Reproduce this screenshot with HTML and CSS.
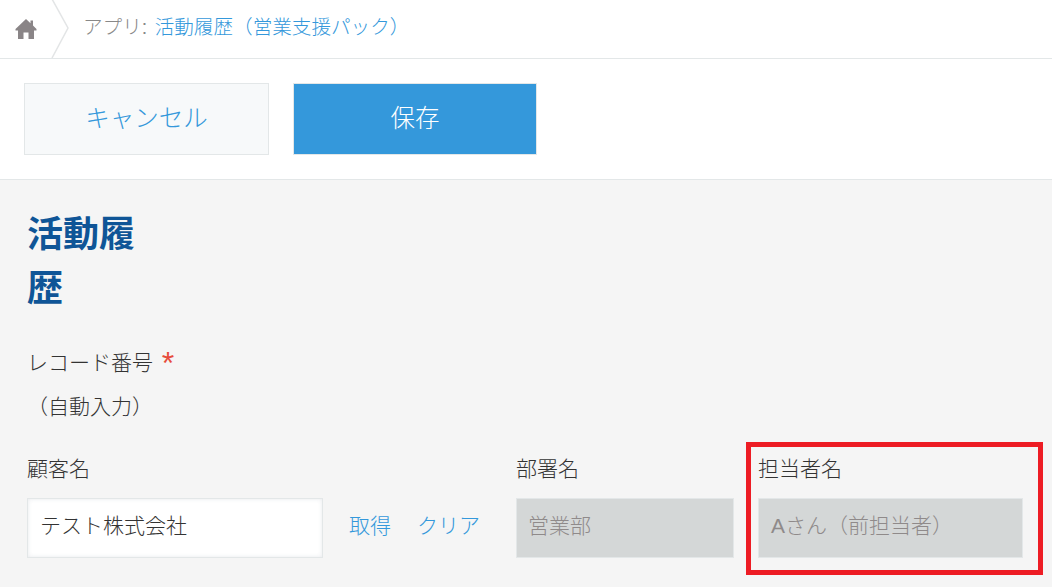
FILE: index.html
```html
<!DOCTYPE html>
<html lang="ja">
<head>
    <meta charset="UTF-8">
    <meta name="viewport" content="width=device-width, initial-scale=1.0">
    <title>活動履歴（営業支援パック）</title>
    <link rel="stylesheet" href="styles.css">
</head>
<body>

    <nav class="breadcrumb">
        <a class="home" href="#">
            <svg width="22" height="22" viewBox="0 0 22 22"><path d="M11 1 L15.5 5.2 V2.5 H18 V7.6 L21.5 11 V12.4 H19 V21 H13.5 V14.5 H8.5 V21 H3 V12.4 H0.5 V11 Z" fill="#8a8587"/></svg>
        </a>
        <svg class="chevron" width="20" height="58" viewBox="0 0 20 58"><path d="M1 -1 L17 28 L1 58" fill="none" stroke="#e3e5e6" stroke-width="1.5"/></svg>
        <span class="crumb-text">アプリ: <a class="crumb-link" href="#">活動履歴（営業支援パック）</a></span>
    </nav>

    <div class="toolbar">
        <button class="btn btn-cancel">キャンセル</button>
        <button class="btn btn-save">保存</button>
    </div>

    <main class="content">
        <h1 class="title">活動履歴</h1>

        <div class="field">
            <div class="label">レコード番号 <span class="required">*</span></div>
            <div class="value">（自動入力）</div>
        </div>

        <div class="row">
            <div class="col">
                <div class="label">顧客名</div>
                <div class="lookup">
                    <div class="input input-customer">テスト株式会社</div>
                    <a class="link" href="#">取得</a>
                    <a class="link" href="#">クリア</a>
                </div>
            </div>
            <div class="col">
                <div class="label">部署名</div>
                <div class="input input-disabled input-dept">営業部</div>
            </div>
            <div class="col">
                <div class="label">担当者名</div>
                <div class="input input-disabled input-person">Aさん（前担当者）</div>
            </div>
        </div>

        <div class="highlight"></div>
    </main>

</body>
</html>
```

FILE: styles.css
```css
html, body {
    margin: 0;
    padding: 0;
    height: 587px;
    overflow: hidden;
    background-color: #fff;
    color: #333;
    font-family: "Liberation Sans", "Noto Sans CJK JP", sans-serif;
    font-weight: 300;
}
a {
    color: #3498db;
    text-decoration: none;
}

.breadcrumb {
    height: 58px;
    display: flex;
    align-items: center;
    border-bottom: 1px solid #e3e7e8;
}
.home {
    display: flex;
    margin-left: 15px;
    width: 36px;
}
.chevron {
    flex-shrink: 0;
}
.crumb-text {
    margin-left: 12px;
    margin-bottom: 7px;
    font-size: 19.6px;
    color: #888;
}
.crumb-link {
    margin-left: 2px;
}

.toolbar {
    height: 120px;
    display: flex;
    align-items: center;
    gap: 24px;
    padding-left: 24px;
    border-bottom: 1px solid #e3e7e8;
}
.btn {
    width: 245px;
    height: 72px;
    font-family: inherit;
    font-weight: 300;
    font-size: 24.5px;
    border: 1px solid #e3e7e8;
    padding: 0 0 6px;
}
.btn-cancel {
    background-color: #f7f9fa;
    color: #3498db;
}
.btn-save {
    width: 244px;
    background-color: #3498db;
    color: #fff;
}

.content {
    position: relative;
    height: 407px;
    background-color: #f5f5f5;
    padding: 0 27px;
}
.title {
    margin: 0;
    padding-top: 28px;
    width: 120px;
    font-size: 36px;
    line-height: 54px;
    font-weight: bold;
    color: #0f5597;
}

.label {
    font-size: 21px;
    line-height: 30px;
}
.required {
    color: #e74c3c;
    font-size: 32px;
    line-height: 20px;
    margin-left: 3px;
    vertical-align: -4px;
}
.field {
    margin-top: 32px;
}
.value {
    font-size: 21px;
    line-height: 30px;
    margin-top: 14px;
}

.row {
    display: flex;
    margin-top: 32px;
}
.col .label {
    margin-bottom: 14px;
}
.lookup {
    display: flex;
    align-items: center;
}
.input {
    height: 60px;
    box-sizing: border-box;
    display: flex;
    align-items: center;
    padding: 0 0 8px 12px;
    font-size: 21px;
    border: 1px solid #e3e7e8;
}
.input-customer {
    width: 296px;
    background-color: #fff;
    box-shadow: inset 0 0 4px rgba(55, 75, 95, 0.12);
}
.input-disabled {
    background-color: #d4d7d7;
    color: #8f8a8a;
}
.input-dept {
    width: 218px;
    padding-left: 11px;
}
.input-person {
    width: 265px;
}
.link {
    font-size: 21px;
    margin-left: 26px;
    padding-bottom: 8px;
}
.lookup .link:last-child {
    margin-right: 36px;
}
.col:last-child {
    margin-left: 24px;
}

.highlight {
    position: absolute;
    left: 746px;
    top: 262px;
    width: 287px;
    height: 123px;
    border: 5px solid #ed1c24;
}
```
